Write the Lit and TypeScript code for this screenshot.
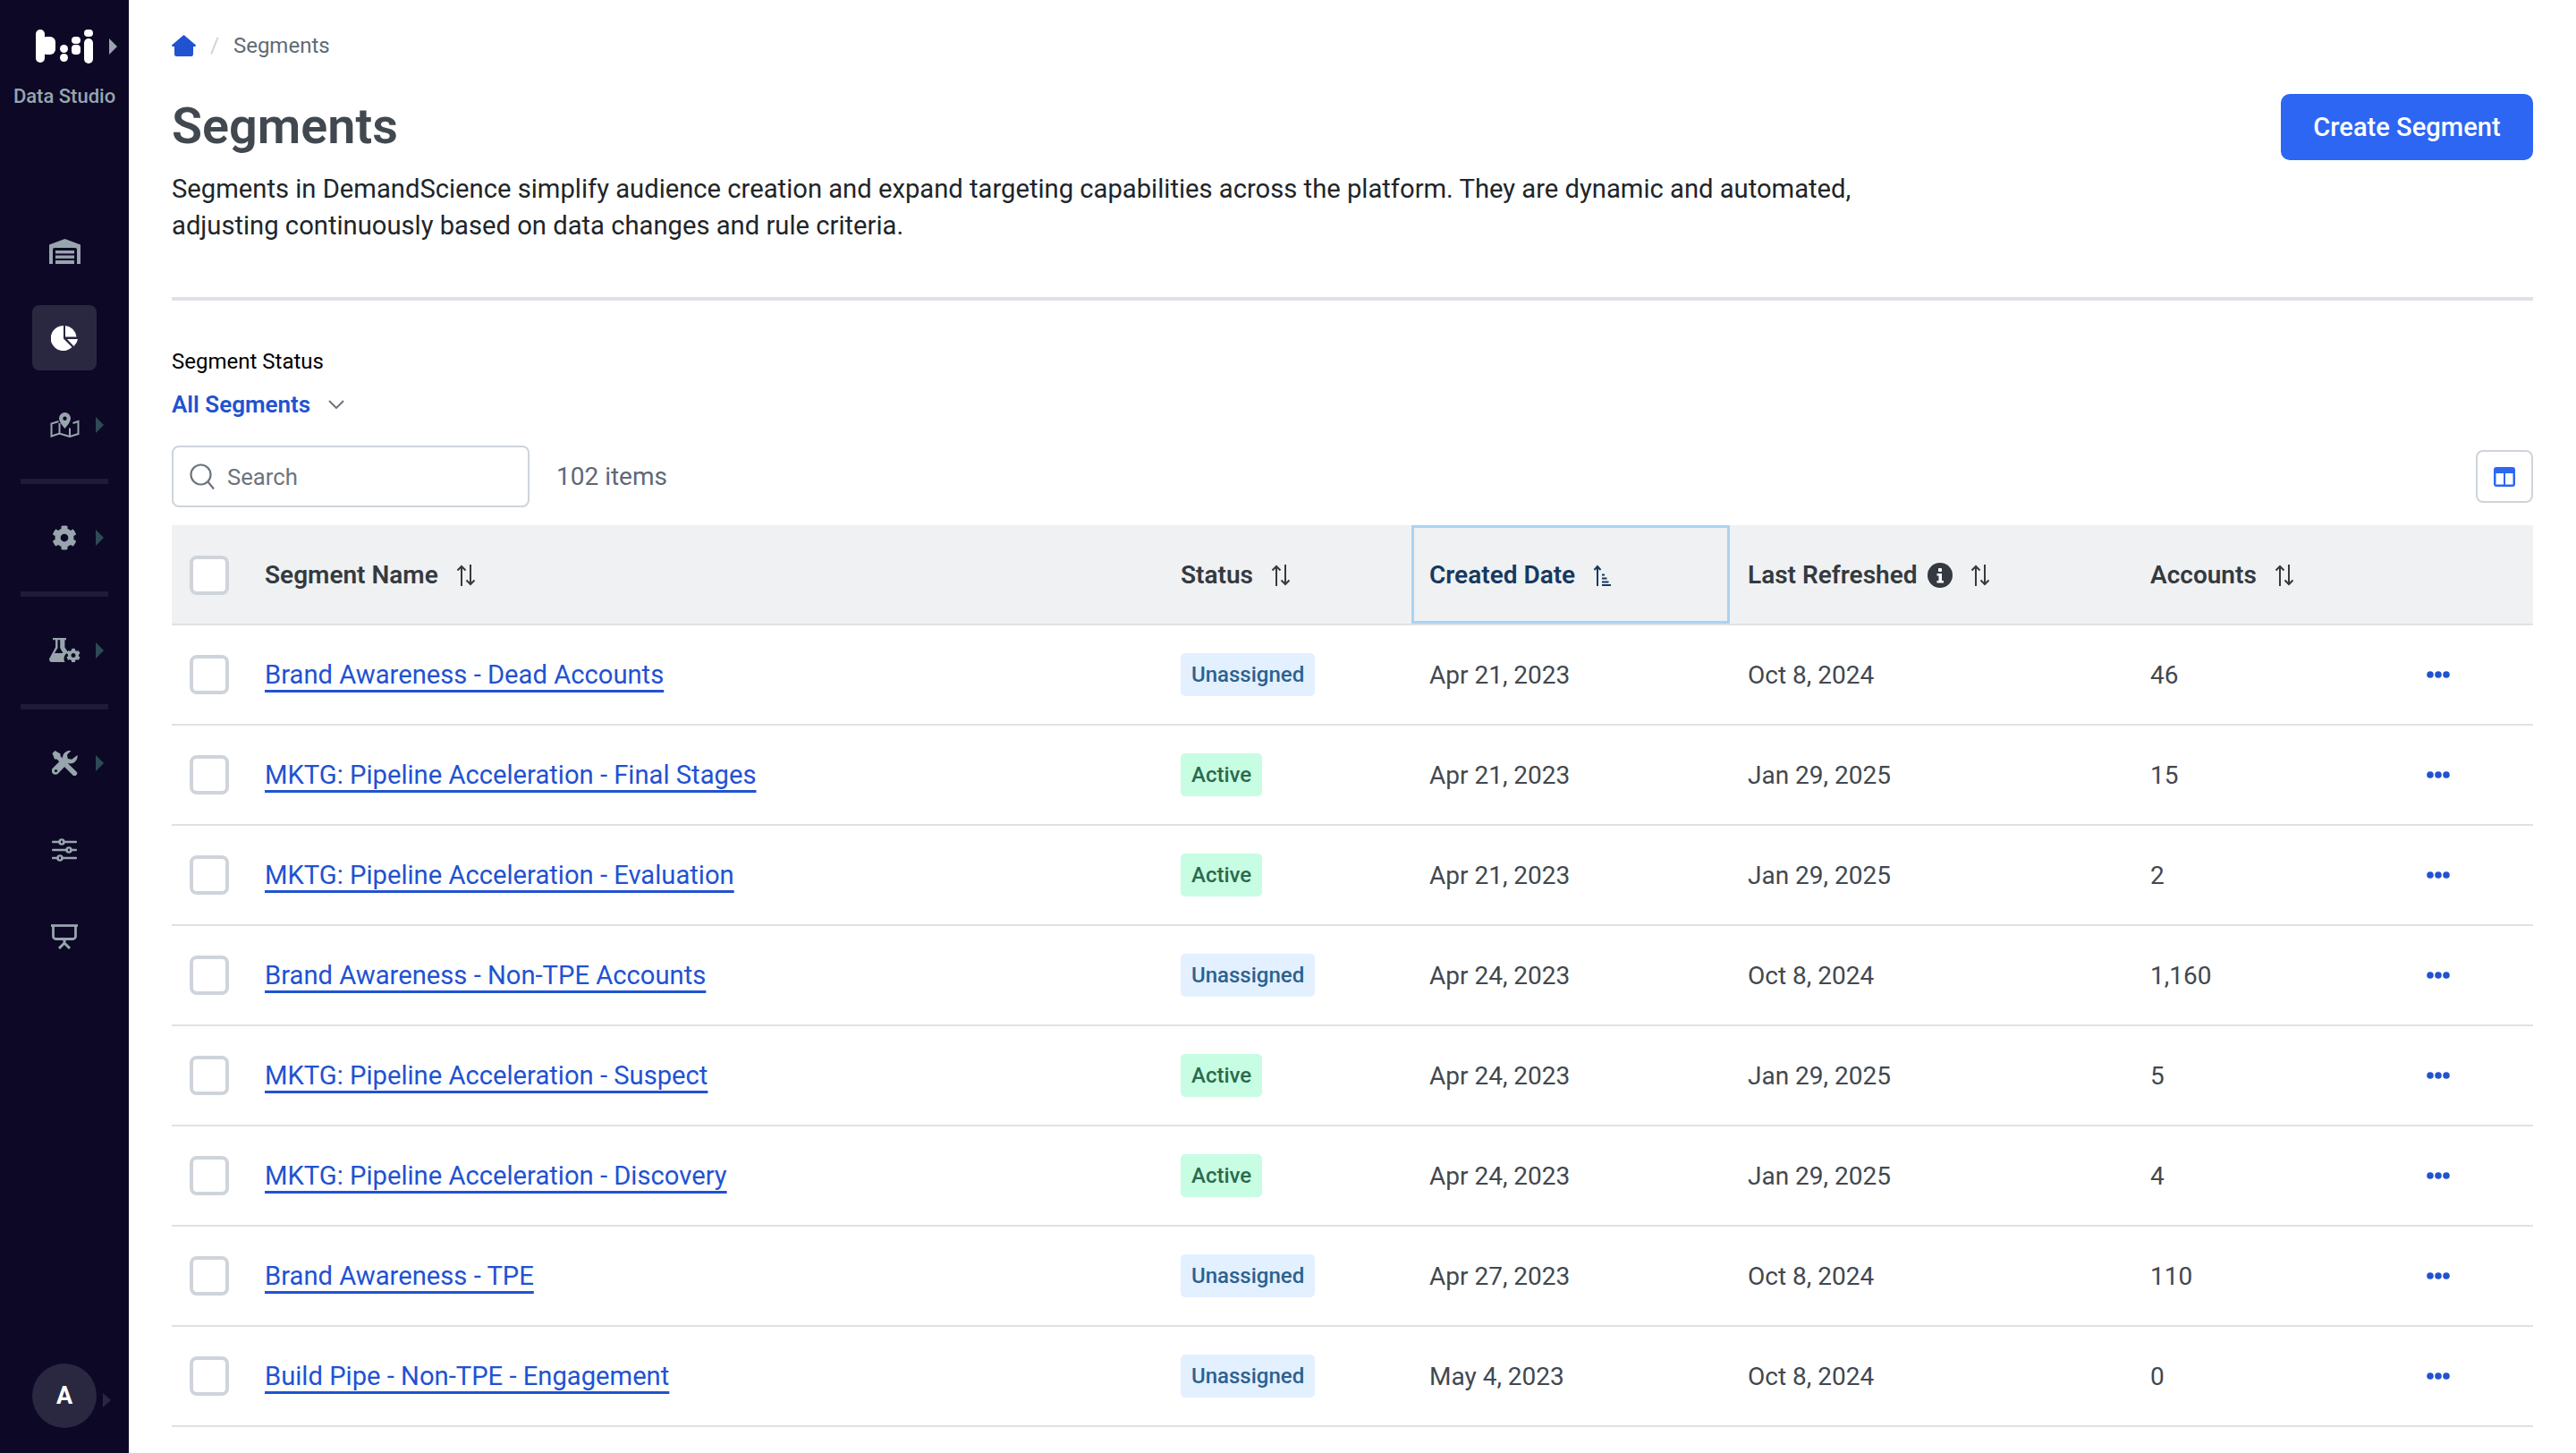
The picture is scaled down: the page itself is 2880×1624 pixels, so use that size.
import { LitElement, css, html, svg } from 'lit';
import { customElement } from 'lit/decorators.js';
import { classMap } from 'lit/directives/class-map.js';

type Status = 'Unassigned' | 'Active';

interface Segment {
  name: string;
  status: Status;
  created: string;
  refreshed: string;
  accounts: string;
}

const SEGMENTS: Segment[] = [
  { name: 'Brand Awareness - Dead Accounts', status: 'Unassigned', created: 'Apr 21, 2023', refreshed: 'Oct 8, 2024', accounts: '46' },
  { name: 'MKTG: Pipeline Acceleration - Final Stages', status: 'Active', created: 'Apr 21, 2023', refreshed: 'Jan 29, 2025', accounts: '15' },
  { name: 'MKTG: Pipeline Acceleration - Evaluation', status: 'Active', created: 'Apr 21, 2023', refreshed: 'Jan 29, 2025', accounts: '2' },
  { name: 'Brand Awareness - Non-TPE Accounts', status: 'Unassigned', created: 'Apr 24, 2023', refreshed: 'Oct 8, 2024', accounts: '1,160' },
  { name: 'MKTG: Pipeline Acceleration - Suspect', status: 'Active', created: 'Apr 24, 2023', refreshed: 'Jan 29, 2025', accounts: '5' },
  { name: 'MKTG: Pipeline Acceleration - Discovery', status: 'Active', created: 'Apr 24, 2023', refreshed: 'Jan 29, 2025', accounts: '4' },
  { name: 'Brand Awareness - TPE', status: 'Unassigned', created: 'Apr 27, 2023', refreshed: 'Oct 8, 2024', accounts: '110' },
  { name: 'Build Pipe - Non-TPE - Engagement', status: 'Unassigned', created: 'May 4, 2023', refreshed: 'Oct 8, 2024', accounts: '0' },
];

const GEAR = 'M487.4 315.7l-42.6-24.6c4.3-23.2 4.3-47 0-70.2l42.6-24.6c4.9-2.8 7.1-8.6 5.5-14-11.1-35.6-30-67.8-54.7-94.6-3.8-4.1-10-5.1-14.8-2.3L380.8 110c-17.9-15.4-38.5-27.3-60.8-35.1V25.8c0-5.6-3.9-10.5-9.4-11.7-36.7-8.2-74.3-7.8-109.2 0-5.5 1.2-9.4 6.1-9.4 11.7V75c-22.2 7.9-42.8 19.8-60.8 35.1L88.7 85.5c-4.9-2.8-11-1.9-14.8 2.3-24.7 26.7-43.6 58.9-54.7 94.6-1.7 5.4.6 11.2 5.5 14L67.3 221c-4.3 23.2-4.3 47 0 70.2l-42.6 24.6c-4.9 2.8-7.1 8.6-5.5 14 11.1 35.6 30 67.8 54.7 94.6 3.8 4.1 10 5.1 14.8 2.3l42.6-24.6c17.9 15.4 38.5 27.3 60.8 35.1v49.2c0 5.6 3.9 10.5 9.4 11.7 36.7 8.2 74.3 7.8 109.2 0 5.5-1.2 9.4-6.1 9.4-11.7v-49.2c22.2-7.9 42.8-19.8 60.8-35.1l42.6 24.6c4.9 2.8 11 1.9 14.8-2.3 24.7-26.7 43.6-58.9 54.7-94.6 1.5-5.5-.7-11.3-5.6-14.1zM256 336c-44.1 0-80-35.9-80-80s35.9-80 80-80 80 35.9 80 80-35.9 80-80 80z';

const logo = html`<svg width="64" height="38" viewBox="0 0 64 38" fill="#fff">
  <rect x="0" y="0" width="10" height="37" rx="5" />
  <rect x="6" y="8" width="16" height="20" rx="6" />
  <rect x="27" y="17" width="9" height="9" rx="4.5" />
  <rect x="27" y="27" width="9" height="9" rx="4.5" />
  <rect x="40" y="8" width="10" height="8" rx="4" />
  <rect x="40" y="17" width="10" height="11" rx="4" />
  <rect x="54" y="0" width="10" height="8" rx="4" />
  <rect x="54" y="10" width="10" height="28" rx="5" />
</svg>`;

const warehouse = html`<svg width="35" height="28" viewBox="0 0 35 28" fill="#98a5ad">
  <path d="M0 6.500 17.500 0 35 6.500V28h-4V12a2 2 0 0 0-2-2H6a2 2 0 0 0-2 2v16H0z" />
  <rect x="7" y="13" width="21" height="3.400" />
  <rect x="7" y="18.500" width="21" height="3.400" />
  <rect x="7" y="24" width="21" height="4" />
</svg>`;

const pie = html`<svg width="30" height="28" viewBox="0 0 30 28" fill="#fff">
  <path d="M14 0v14.500l9.500 9.500A14 14 0 1 1 14 0z" />
  <path d="M16 0A14 14 0 0 1 28.500 12.500H16z" />
  <path d="M18 15h12a14 14 0 0 1-4.500 8z" />
</svg>`;

const mapPin = html`<svg width="33" height="28" viewBox="0 0 33 28" fill="none" stroke="#98a5ad" stroke-width="2">
  <path d="M9.500 10 1.500 12.500v14l9-3 11.500 3.500 9.500-3v-14l-6 2" />
  <path d="M10.500 12v11.500M22 17.500v9.500" />
  <path fill="#98a5ad" stroke="none" fill-rule="evenodd" d="M16.500 0a6.500 6.500 0 0 1 6.500 6.500c0 4-4 8.500-6.500 11.500C14 15 10 10.500 10 6.500A6.500 6.500 0 0 1 16.500 0zm0 4.500a2.200 2.200 0 1 0 0 4.400 2.200 2.200 0 0 0 0-4.400z" />
</svg>`;

const gear = html`<svg width="28" height="28" viewBox="0 0 512 512" fill="#98a5ad"><path d=${GEAR} /></svg>`;

const flask = html`<svg width="35" height="28" viewBox="0 0 35 28" fill="#98a5ad">
  <path d="M4 0h15v2.200h-1.600v8.300L21 16a8 8 0 0 0-3.500 11H3a3 3 0 0 1-2.500-4.600L7 10.500V2.200H4zM9.500 2.200v9L6 17h9.500l-3.300-5.800V2.200z" fill-rule="evenodd" />
  <svg x="19" y="11.500" width="16" height="16" viewBox="0 0 512 512"><path d=${GEAR} /></svg>
</svg>`;

const tools = html`<svg width="29" height="28" viewBox="0 0 29 28" fill="#98a5ad">
  <path d="M.5 3 3.500 0 9.500 3.500v2.500l18 17.500a2.500 2.500 0 0 1 0 3.500l-.5.500a2.500 2.500 0 0 1-3.500 0L5.500 9.500H3z" />
  <path d="M28.500 5a8 8 0 0 1-10.500 9L7.500 25l-.5.500a4.200 4.200 0 0 1-6-6L12 8.500A8 8 0 0 1 21.500 0l-4.500 4.500.8 4.500 4.500.8z" />
  <circle cx="4.500" cy="22.500" r="1.600" fill="#0c0826" />
</svg>`;

const sliders = html`<svg width="28" height="26" viewBox="0 0 28 26" fill="none" stroke="#98a5ad" stroke-width="2.400" stroke-linecap="round">
  <path d="M1 4h8M13 4h14M1 13h16M21 13h6M1 22h6M11 22h16" />
  <circle cx="11" cy="4" r="2.600" />
  <circle cx="19" cy="13" r="2.600" />
  <circle cx="9" cy="22" r="2.600" />
</svg>`;

const screen = html`<svg width="30" height="28" viewBox="0 0 30 28" fill="none" stroke="#98a5ad" stroke-width="2.800">
  <path d="M0 1.500h30" />
  <path d="M2.500 1.500v12a3 3 0 0 0 3 3h19a3 3 0 0 0 3-3v-12" />
  <path d="M15 17.500v3M9 27l6-6 6 6" stroke-width="3" />
</svg>`;

const home = html`<svg width="27" height="24" viewBox="0 0 27 24" fill="#2152d1">
  <path d="M13.500 0 27 11.500l-.5 1.500H24v8.500a2.500 2.500 0 0 1-2.500 2.500h-16A2.500 2.500 0 0 1 3 21.500V13H.5L0 11.500z" />
</svg>`;

const chevron = html`<svg width="18" height="10" viewBox="0 0 18 10" fill="none" stroke="#6c757d" stroke-width="2">
  <path d="M1 1l8 8 8-8" />
</svg>`;

const search = html`<svg width="28" height="30" viewBox="0 0 28 30" fill="none" stroke="#6c757d" stroke-width="2.200">
  <circle cx="12.500" cy="12.500" r="11" />
  <path d="M20.500 20.500 27 28.500" />
</svg>`;

const columns = html`<svg width="24" height="22" viewBox="0 0 24 22">
  <rect width="24" height="22" rx="3" fill="#2d66f3" />
  <rect x="2.500" y="7" width="8.500" height="12.500" fill="#fff" />
  <rect x="13" y="7" width="8.500" height="12.500" fill="#fff" />
</svg>`;

const sort = html`<svg class="sort" width="22" height="24" viewBox="0 0 22 24" fill="none" stroke="currentColor" stroke-width="2">
  <path d="M6 24V2M1.500 6.500 6 2l4.500 4.500M16 0v22M11.500 17.500 16 22l4.500-4.500" />
</svg>`;

const sortAsc = html`<svg class="sort" width="20" height="24" viewBox="0 0 20 24" fill="none" stroke="currentColor" stroke-width="2">
  <path d="M5 24V2M1.500 6 5 2l3.500 4M10 11.500h3M10 15.500h5.500M10 19.500h7.500M10 23h10" />
</svg>`;

const info = html`<svg width="28" height="28" viewBox="0 0 28 28">
  <circle cx="14" cy="14" r="14" fill="#343a40" />
  <rect x="12" y="6" width="4" height="4" rx="1" fill="#fff" />
  <path d="M10.500 12h5.500v8h2v2.500h-7.500V20h2v-5.500h-2z" fill="#fff" />
</svg>`;

const dots = svg`<circle cx="4" cy="4" r="3.800" /><circle cx="13" cy="4" r="3.800" /><circle cx="22" cy="4" r="3.800" />`;

@customElement('app-root')
export class AppRoot extends LitElement {
  static styles = css`
    :host {
      display: flex;
      width: 2880px;
      height: 1624px;
      overflow: hidden;
      background: #fff;
      font-family: Roboto, 'Liberation Sans', sans-serif;
    }

    .sidebar {
      width: 144px;
      flex: none;
      display: flex;
      flex-direction: column;
      align-items: center;
      background: #0c0826;
      padding: 33px 0 28px;
      box-sizing: border-box;
    }

    .logo {
      position: relative;
      height: 38px;
    }

    .brand {
      margin-top: 20px;
      height: 34px;
      line-height: 34px;
      font-size: 22px;
      font-weight: 500;
      color: #98a5ad;
    }

    .nav {
      margin-top: 107px;
      flex: 1;
      width: 100%;
      display: flex;
      flex-direction: column;
    }

    .item {
      position: relative;
      height: 97px;
      display: flex;
      align-items: center;
      justify-content: center;
    }

    .item.active::before {
      content: '';
      position: absolute;
      left: 36px;
      top: 12px;
      width: 72px;
      height: 73px;
      border-radius: 8px;
      background: #2a2740;
    }

    .item svg {
      position: relative;
    }

    .caret {
      position: absolute;
      left: 107px;
      top: 50%;
      margin-top: -9px;
      width: 0;
      height: 0;
      border-style: solid;
      border-width: 9px 0 9px 9px;
      border-color: transparent transparent transparent #2e4a56;
    }

    .logo .caret {
      left: 82px;
      border-color: transparent transparent transparent #98a5ad;
    }

    .rule {
      flex: none;
      margin: 11.5px 23px;
      height: 6px;
      background: #1f1a38;
    }

    .avatar {
      position: relative;
      width: 72px;
      height: 72px;
      border-radius: 50%;
      background: #2a2740;
      display: flex;
      align-items: center;
      justify-content: center;
      color: #fff;
      font-size: 27px;
      font-weight: 700;
    }

    .avatar .caret {
      left: 79px;
      margin-top: -3px;
      border-width: 8px 0 8px 9px;
      border-color: transparent transparent transparent #2a2740;
    }

    main {
      flex: 1;
      min-width: 0;
      padding: 0 48px;
    }

    .crumbs {
      height: 36px;
      margin-top: 33px;
      display: flex;
      align-items: center;
      font-size: 24px;
      color: #5f6b76;
    }

    .crumbs .sep {
      margin: 0 16px 0 16px;
      color: #ced4da;
    }

    .head {
      display: flex;
      justify-content: space-between;
      align-items: flex-start;
      margin-top: 36px;
    }

    h1 {
      margin: 0;
      font-size: 55.800px;
      line-height: 72px;
      font-weight: 600;
      color: #42484f;
    }

    .intro {
      margin: 14px 0 0;
      width: 1900px;
      font-size: 29.200px;
      line-height: 41px;
      color: #212529;
    }

    .create {
      width: 282px;
      height: 74px;
      border: 0;
      border-radius: 10px;
      background: #2d66f3;
      color: #fff;
      font-family: inherit;
      font-size: 29.100px;
      font-weight: 500;
    }

    .divider {
      height: 4px;
      margin-top: 59px;
      background: #dee2e6;
    }

    .label {
      margin-top: 53px;
      line-height: 30px;
      font-size: 24px;
      color: #000;
    }

    .filter {
      margin-top: 18px;
      height: 30px;
      display: flex;
      align-items: center;
      gap: 20px;
      font-size: 26px;
      font-weight: 600;
      color: #2152d1;
    }

    .toolbar {
      margin-top: 31px;
      display: flex;
      align-items: center;
    }

    .search {
      width: 400px;
      height: 69px;
      box-sizing: border-box;
      border: 2.500px solid #ced4da;
      border-radius: 8px;
      padding-left: 18px;
      display: flex;
      align-items: center;
      gap: 14px;
      font-size: 25.700px;
      color: #6c757d;
    }

    .count {
      margin-left: 30px;
      flex: 1;
      font-size: 28px;
      color: #5f6877;
    }

    .col-btn {
      width: 64px;
      height: 59px;
      box-sizing: border-box;
      border: 2.500px solid #ced4da;
      border-radius: 8px;
      display: flex;
      align-items: center;
      justify-content: center;
    }

    .table {
      margin-top: 20px;
    }

    .row {
      display: grid;
      grid-template-columns: 84px 1024px 278px 356px 450px 309px 139px;
      align-items: center;
      height: 112px;
      box-sizing: border-box;
      border-bottom: 2px solid #dee2e6;
      font-size: 28px;
      color: #42484f;
    }

    .row > div {
      padding-left: 20px;
      min-width: 0;
    }

    .row.header {
      background: #f0f1f3;
      font-weight: 600;
      color: #343a40;
    }

    .row.header > div {
      display: flex;
      align-items: center;
      gap: 20px;
      height: 100%;
      padding-top: 1px;
      box-sizing: border-box;
    }

    .row.header > .sorted {
      position: relative;
      color: #16395f;
    }

    .row.header > .sorted::after {
      content: '';
      position: absolute;
      inset: 0;
      border: 3px solid #a9d3f3;
    }

    .row.header > .titled {
      gap: 0;
    }

    .titled > svg:first-of-type {
      margin: 0 20px 0 12px;
    }

    .checkbox {
      display: block;
      width: 44px;
      height: 44px;
      box-sizing: border-box;
      border: 4px solid #ced4da;
      border-radius: 8px;
      background: #fff;
    }

    .link {
      font-size: 29.200px;
      color: #2152d1;
      text-decoration: underline;
      text-decoration-thickness: 2.500px;
      text-underline-offset: 7px;
    }

    .badge {
      display: inline-block;
      height: 48px;
      line-height: 48px;
      padding: 0 12px;
      border-radius: 5px;
      font-size: 24px;
      font-weight: 500;
    }

    .badge.unassigned {
      background: #e3f0ff;
      color: #2a6290;
    }

    .badge.active {
      background: #c7fde3;
      color: #2a6a4d;
    }

    .more {
      display: block;
      margin-left: 0;
      fill: #2152d1;
    }
  `;

  private renderRow(s: Segment) {
    const badge = { badge: true, unassigned: s.status === 'Unassigned', active: s.status === 'Active' };
    return html`<div class="row">
      <div><span class="checkbox"></span></div>
      <div><a class="link">${s.name}</a></div>
      <div><span class=${classMap(badge)}>${s.status}</span></div>
      <div>${s.created}</div>
      <div>${s.refreshed}</div>
      <div>${s.accounts}</div>
      <div><svg class="more" width="26" height="8" viewBox="0 0 26 8">${dots}</svg></div>
    </div>`;
  }

  render() {
    return html`
      <aside class="sidebar">
        <div class="logo">${logo}<span class="caret"></span></div>
        <div class="brand">Data Studio</div>
        <nav class="nav">
          <div class="item">${warehouse}</div>
          <div class="item active">${pie}</div>
          <div class="item">${mapPin}<span class="caret"></span></div>
          <div class="rule"></div>
          <div class="item">${gear}<span class="caret"></span></div>
          <div class="rule"></div>
          <div class="item">${flask}<span class="caret"></span></div>
          <div class="rule"></div>
          <div class="item">${tools}<span class="caret"></span></div>
          <div class="item">${sliders}</div>
          <div class="item">${screen}</div>
        </nav>
        <div class="avatar">A<span class="caret"></span></div>
      </aside>
      <main>
        <div class="crumbs">${home}<span class="sep">/</span><span>Segments</span></div>
        <div class="head">
          <div>
            <h1>Segments</h1>
            <p class="intro">Segments in DemandScience simplify audience creation and expand targeting capabilities across the platform. They are dynamic and automated, adjusting continuously based on data changes and rule criteria.</p>
          </div>
          <button class="create">Create Segment</button>
        </div>
        <div class="divider"></div>
        <div class="label">Segment Status</div>
        <div class="filter">All Segments ${chevron}</div>
        <div class="toolbar">
          <div class="search">${search}<span>Search</span></div>
          <div class="count">102 items</div>
          <div class="col-btn">${columns}</div>
        </div>
        <div class="table">
          <div class="row header">
            <div><span class="checkbox"></span></div>
            <div>Segment Name ${sort}</div>
            <div>Status ${sort}</div>
            <div class="sorted">Created Date ${sortAsc}</div>
            <div class="titled">Last Refreshed ${info}${sort}</div>
            <div>Accounts ${sort}</div>
            <div></div>
          </div>
          ${SEGMENTS.map((s) => this.renderRow(s))}
        </div>
      </main>
    `;
  }
}
